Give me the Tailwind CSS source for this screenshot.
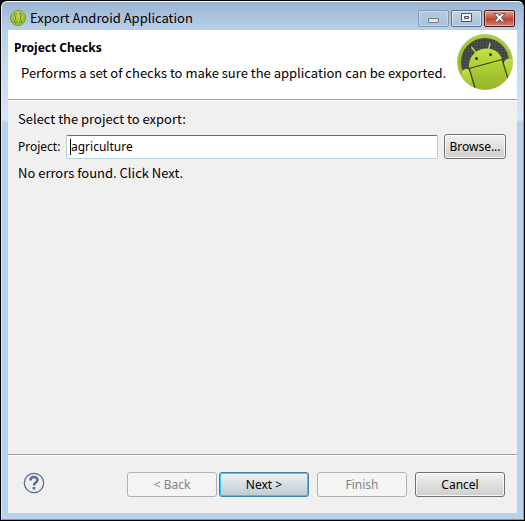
<!DOCTYPE html>
<html lang="en">
<head>
<meta charset="utf-8">
<meta name="viewport" content="width=device-width, initial-scale=1">
<title>Export Android Application</title>
<script src="https://cdn.jsdelivr.net/npm/@tailwindcss/browser@4"></script>
</head>
<body class="min-h-screen bg-black font-['Noto_Sans',sans-serif] text-[12px] leading-4 text-black">
<div class="flex min-h-screen flex-col p-px">
<main class="flex flex-1 flex-col rounded-t-md border border-t-white border-r-[#35c5e2] border-b-[#35b5d5] border-l-[#dceaf6] bg-[#b9d1ea] bg-[linear-gradient(#99b4d1_0,#b9d1ea_28px,#d9e6f5_118px,#b9d1ea_120px)] px-[6px] pb-[6px]">
  <header class="flex h-[28px] items-center pt-1">
    <svg class="ml-[2px] size-4 shrink-0" viewBox="0 0 16 16" aria-hidden="true">
      <defs><radialGradient id="g" cy=".3"><stop offset="0" stop-color="#c4e03a"/><stop offset="1" stop-color="#9cc41a"/></radialGradient></defs>
      <circle cx="8" cy="8" r="7.6" fill="url(#g)" stroke="#6c8a10" stroke-width=".7"/>
      <path d="M6.800 4Q5 4 5 6T3.800 8Q5 8 5 10t1.800 2M9.200 4Q11 4 11 6t1.200 2Q11 8 11 10t-1.800 2" fill="none" stroke="#3f4a10" stroke-width="2"/>
      <path d="M6.800 4Q5 4 5 6T3.800 8Q5 8 5 10t1.800 2M9.200 4Q11 4 11 6t1.200 2Q11 8 11 10t-1.800 2" fill="none" stroke="#f8fae0" stroke-width=".9"/>
    </svg>
    <h1 class="ml-1 flex-1 font-['Noto_Sans_CJK_SC',sans-serif] text-[13px] leading-4">Export Android Application</h1>
    <div class="mr-[2px] flex gap-[2px]">
      <button aria-label="Minimize" class="flex h-[17px] w-[31px] items-center justify-center rounded-xs border border-[#8499b0] bg-linear-to-b from-[#b5cadf] to-[#a9c2dc] inset-ring inset-ring-white/30"><svg width="12" height="14" viewBox="0 0 12 14"><rect x=".5" y="7.500" width="10" height="4" rx=".5" fill="#e4e4e4" stroke="#777e88"/></svg></button>
      <button aria-label="Maximize" class="flex h-[17px] w-[31px] items-center justify-center rounded-xs border border-[#56708e] bg-linear-to-b from-[#c5d6e8] via-[#b6cade] via-50% to-[#a9c0d8] inset-ring inset-ring-white/50"><svg width="12" height="10" viewBox="0 0 12 10"><path d="M.5.5h10v8H.5zM3.500 3.500h4v2h-4z" fill="#f4f4f4" fill-rule="evenodd" stroke="#4c5568"/></svg></button>
      <button aria-label="Close" class="flex h-[17px] w-[31px] items-center justify-center rounded-xs border border-[#491423] bg-linear-to-b from-[#dda295] from-0% via-[#c0402f] via-55% to-[#d68366] inset-ring inset-ring-white/40"><svg width="13" height="10" viewBox="0 0 13 10"><path d="M1 .5h3.200l2.300 2.400L8.800.5H12L8.400 4.700 12 9H8.800L6.500 6.500 4.200 9H1l3.600-4.300z" fill="#fafafa" stroke="#555a6b"/></svg></button>
    </div>
  </header>
  <section class="flex flex-1 flex-col bg-[#f0f0f0]">
    <div class="flex h-[70px] items-start justify-between border-b border-[#a0a0a0] bg-white pl-[6px]">
      <div class="pt-[10px]">
        <h2 class="font-bold">Project Checks</h2>
        <p class="mt-[9px] pl-[7px] font-['Noto_Sans_CJK_SC',sans-serif] text-[13px] leading-4">Performs a set of checks to make sure the application can be exported.</p>
      </div>
      <svg class="mt-1 mr-1 size-[56px] shrink-0" viewBox="0 0 56 56" aria-hidden="true">
        <defs>
          <linearGradient id="r" x2="0" y2="1"><stop offset="0" stop-color="#a9cf38"/><stop offset="1" stop-color="#86a81b"/></linearGradient>
          <linearGradient id="b" x2="0" y2="1"><stop offset="0" stop-color="#c3e23f"/><stop offset="1" stop-color="#93b526"/></linearGradient>
          <pattern id="p" width="3" height="3" patternUnits="userSpaceOnUse"><path d="M0 0h3v3H0z" fill="#505050"/><path d="M0 0h2v2H0z" fill="#404040"/></pattern>
          <clipPath id="c"><circle cx="28" cy="28" r="24"/></clipPath>
          <clipPath id="o"><circle cx="28" cy="28" r="27.500"/></clipPath>
        </defs>
        <circle cx="28" cy="28" r="27.500" fill="url(#r)" stroke="#b7cf72"/>
        <path d="M0 0h56v56H0z" fill="url(#p)" clip-path="url(#c)"/>
        <g clip-path="url(#o)">
          <path d="M12 34C11 25 17 17 25 15s17 1 20 10l10 31H17z" fill="url(#b)"/>
          <path d="M14.500 13l4.500 6M33 9l-1.500 7" stroke="#bddb48" stroke-width="1.400"/>
          <rect x="4" y="35" width="9" height="26" rx="4.500" transform="rotate(-14 8 36)" fill="url(#b)"/>
          <rect x="46" y="25" width="10" height="26" rx="5" transform="rotate(-14 50 26)" fill="url(#b)"/>
          <path d="M12 34.500l33-9M12 34l6 20M45 25l6 20" fill="none" stroke="#3b4015" stroke-width="1.200"/>
        </g>
        <circle cx="19.500" cy="24.500" r="1.500" fill="#333"/><circle cx="33.500" cy="20.500" r="1.500" fill="#333"/>
      </svg>
    </div>
    <div class="flex flex-1 flex-col border-t border-white pt-[10px] pr-[11px] pl-[10px]">
      <p class="font-['Noto_Sans_CJK_SC',sans-serif] text-[13px] leading-4">Select the project to export:</p>
      <div class="mt-[7px] flex items-center">
        <label for="project" class="w-12">Project:</label>
        <div class="relative flex min-w-0 flex-1">
          <input id="project" value="agriculture" class="h-[24px] w-full min-w-0 rounded-xs border border-[#b5cfe7] border-t-[#3d7bad] bg-white pl-1 outline-none">
          <span class="absolute top-1 left-1 h-4 w-px bg-black" aria-hidden="true"></span>
        </div>
        <button class="ml-[6px] h-[25px] w-[62px] rounded-[3px] border border-[#707070] bg-linear-to-b from-[#f2f2f2] from-0% via-[#dfdfdf] via-50% to-[#cfcfcf] inset-ring inset-ring-white/80">Browse...</button>
      </div>
      <p class="mt-[6px] font-['Noto_Sans_CJK_SC',sans-serif] text-[13px] leading-4">No errors found. Click Next.</p>
    </div>
    <footer class="flex items-start border-t border-[#a0a0a0] pt-[17px] pr-3 pb-4 pl-[15px] shadow-[inset_0_1px_#fff]">
      <button aria-label="Help" class="mr-auto"><svg class="size-[22px]" viewBox="0 0 22 22"><circle cx="11" cy="11" r="9.700" fill="#eef0f4" stroke="#5c6f92" stroke-width="1.300"/><path d="M7.500 8.500C7.500 4 14.500 4 14.500 8c0 2.600-3.500 2.600-3.500 5.500" fill="none" stroke="#5c6f92" stroke-width="2.600"/><path d="M9.600 15h2.800v2.500H9.600z" fill="#5c6f92"/></svg></button>
      <button disabled class="h-[25px] w-[90px] rounded-[3px] border border-[#adb2b5] bg-[#f4f4f4] text-[#838383]">&lt; Back</button>
      <button class="ml-[2px] h-[25px] w-[90px] rounded-[3px] border border-[#3c7fb1] bg-linear-to-b from-[#f0f3f5] from-0% via-[#d5dee3] via-50% to-[#bfccd3] inset-ring inset-ring-[#35c8f0]">Next &gt;</button>
      <button disabled class="ml-2 h-[25px] w-[90px] rounded-[3px] border border-[#adb2b5] bg-[#f4f4f4] text-[#838383]">Finish</button>
      <button class="ml-2 h-[25px] w-[90px] rounded-[3px] border border-[#707070] bg-linear-to-b from-[#f2f2f2] from-0% via-[#dfdfdf] via-50% to-[#cfcfcf] inset-ring inset-ring-white/80">Cancel</button>
    </footer>
  </section>
</main>
</div>
</body>
</html>
